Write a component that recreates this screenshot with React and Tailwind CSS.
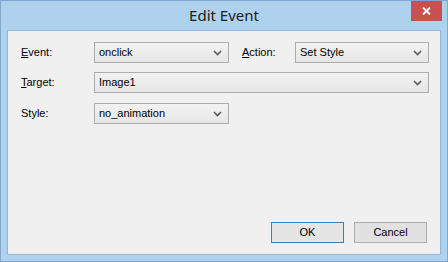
import React from "react";

function Chevron() {
  return (
    <svg width="9" height="6" viewBox="0 0 9 6" className="shrink-0">
      <path d="M1 1 L4.5 4.5 L8 1" fill="none" stroke="#5a5a5a" strokeWidth="1.6" />
    </svg>
  );
}

function Combo({ value, className }) {
  return (
    <div
      className={
        "flex h-[21px] items-center justify-between border border-[#acacac] bg-gradient-to-b from-[#f2f2f2] to-[#e6e6e6] pl-[4px] pr-[6px] " +
        className
      }
    >
      <span className="text-[11px] text-black">{value}</span>
      <Chevron />
    </div>
  );
}

export default function App() {
  return (
    <div
      className="flex h-[262px] w-[448px] flex-col border border-[#7fa7cf] bg-[#aed1ee] text-black"
      style={{ fontFamily: '"Liberation Sans", Arial, sans-serif' }}
    >
      <div className="relative flex h-[29px] shrink-0 items-center justify-center">
        <span
          className="text-[15px] text-[#1b1b1b]"
          style={{ fontFamily: '"Noto Sans", "Open Sans", sans-serif' }}
        >
          Edit Event
        </span>
        <div className="absolute right-[5px] top-0 flex h-[20px] w-[31px] items-center justify-center bg-[#c75050]">
          <svg width="9" height="8" viewBox="0 0 9 8">
            <path d="M1 0.5 L8 7.5 M8 0.5 L1 7.5" stroke="#ffffff" strokeWidth="1.8" />
          </svg>
        </div>
      </div>
      <div className="mx-[6px] mb-[6px] flex flex-1 flex-col border border-[#92b6d8] bg-[#f0f0f0] pb-[11px] pl-[13px] pr-[10px] pt-[11px]">
        <div className="flex h-[21px] items-center">
          <span className="w-[73px] text-[11px]">
            <span className="underline">E</span>vent:
          </span>
          <Combo value="onclick" className="w-[135px]" />
          <span className="ml-[13px] w-[53px] text-[11px]">
            <span className="underline">A</span>ction:
          </span>
          <Combo value="Set Style" className="w-[134px]" />
        </div>
        <div className="mt-[9px] flex h-[21px] items-center">
          <span className="w-[73px] text-[11px]">
            <span className="underline">T</span>arget:
          </span>
          <Combo value="Image1" className="w-[335px]" />
        </div>
        <div className="mt-[10px] flex h-[21px] items-center">
          <span className="w-[73px] text-[11px]">Style:</span>
          <Combo value="no_animation" className="w-[135px]" />
        </div>
        <div className="mt-auto flex justify-end gap-[10px] pr-[3px]">
          <button className="flex h-[21px] w-[73px] items-center justify-center border border-[#3c7fb1] bg-[#e5e5e5] text-[11px] text-black">
            OK
          </button>
          <button className="flex h-[21px] w-[73px] items-center justify-center border border-[#adadad] bg-[#e1e1e1] text-[11px] text-black">
            Cancel
          </button>
        </div>
      </div>
    </div>
  );
}
